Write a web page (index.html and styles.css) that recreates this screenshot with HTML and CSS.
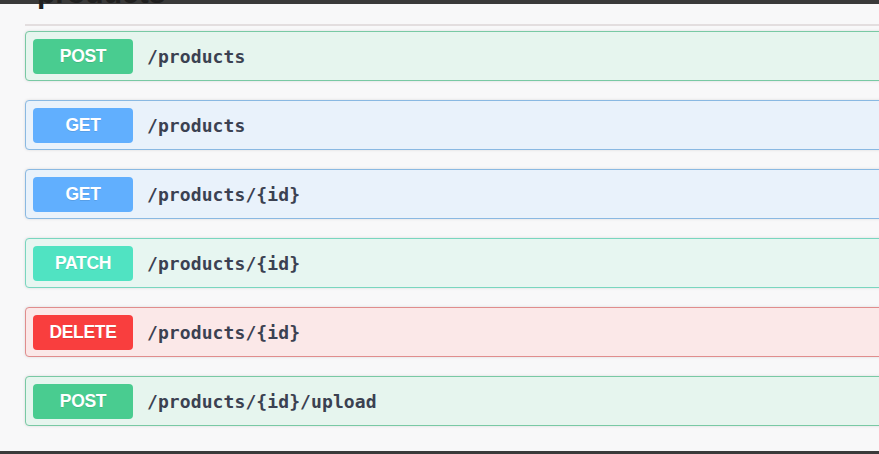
FILE: index.html
```html
<!DOCTYPE html>
<html>
<head>
<meta charset="utf-8">
<link rel="stylesheet" href="styles.css">
</head>
<body>
<div class="page">
  <div class="tag-section">
    <h3 class="tag-heading"><span class="tag-name">products</span></h3>
    <div class="ops">
      <div class="op op-post"><span class="method">POST</span><span class="path">/products</span></div>
      <div class="op op-get"><span class="method">GET</span><span class="path">/products</span></div>
      <div class="op op-get"><span class="method">GET</span><span class="path">/products/{id}</span></div>
      <div class="op op-patch"><span class="method">PATCH</span><span class="path">/products/{id}</span></div>
      <div class="op op-delete"><span class="method">DELETE</span><span class="path">/products/{id}</span></div>
      <div class="op op-post"><span class="method">POST</span><span class="path">/products/{id}/upload</span></div>
    </div>
  </div>
  <div class="bottom-bar"></div>
</div>
</body>
</html>
```
FILE: styles.css
```css
html, body {
  margin: 0;
  padding: 0;
  height: 454px;
  overflow: hidden;
  background: #f8f8f9;
}
.page {
  display: flex;
  flex-direction: column;
  height: 454px;
  background: linear-gradient(#3a3a3a 0 4px, transparent 4px);
}
.tag-section {
  flex: 1;
  padding-left: 25px;
  margin-right: -12px;
}
.tag-heading {
  display: flow-root;
  margin: 0;
  height: 24px;
  border-bottom: 2px solid #e3dedf;
  font-family: "Liberation Sans", Arial, sans-serif;
  font-size: 30px;
  font-weight: 700;
  color: #202020;
  overflow: visible;
}
.tag-name {
  display: block;
  margin-left: 12px;
  margin-top: -22px;
  line-height: 30px;
}
.ops {
  display: flex;
  flex-direction: column;
  gap: 19px;
  margin-top: 5px;
}
.op {
  display: flex;
  align-items: center;
  height: 48px;
  padding: 0 7px;
  border: 1px solid;
  border-radius: 4px;
  box-shadow: 0 0 3px rgba(0,0,0,.12);
}
.method {
  flex: none;
  width: 100px;
  height: 35px;
  margin-top: 1px;
  display: flex;
  align-items: center;
  justify-content: center;
  border-radius: 4px;
  color: #fff;
  font-family: "Liberation Sans", Arial, sans-serif;
  font-size: 17.5px;
  font-weight: 700;
  letter-spacing: -0.3px;
  text-shadow: 0 1px 0 rgba(0,0,0,.1);
}
.path {
  margin-left: 14px;
  font-family: "DejaVu Sans Mono", "Liberation Mono", monospace;
  font-size: 18px;
  font-weight: 700;
  color: #3b4151;
  letter-spacing: 0.1px;
}
.op-post { background: #e6f5ee; border-color: #79c9a4; }
.op-post .method { background: #49cc90; }
.op-get { background: #e9f2fb; border-color: #8ab9e2; }
.op-get .method { background: #61affe; }
.op-patch { background: #e7f6f1; border-color: #79d6bf; }
.op-patch .method { background: #50e3c2; }
.op-delete { background: #fbe8e8; border-color: #e08d8d; }
.op-delete .method { background: #f93e3e; }
.bottom-bar {
  height: 3px;
  background: #3a3a3a;
}
```
